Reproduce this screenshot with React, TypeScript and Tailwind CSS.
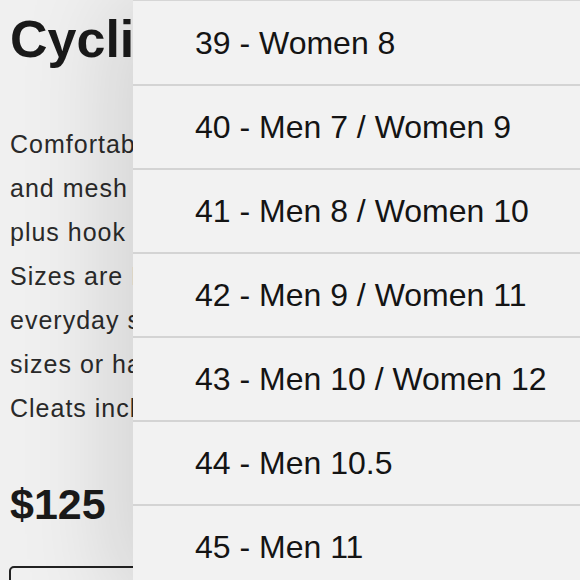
import React from "react";

const sizes = [
  "39 - Women 8",
  "40 - Men 7 / Women 9",
  "41 - Men 8 / Women 10",
  "42 - Men 9 / Women 11",
  "43 - Men 10 / Women 12",
  "44 - Men 10.5",
  "45 - Men 11",
];

const lines = [
  "Comfortable cycling shoes with synthetic upper",
  "and mesh panels for breathability. Velcro straps",
  "plus hook and loop closure for a secure fit.",
  "Sizes are European; they run small compared to",
  "everyday shoes, so consider ordering one size up for",
  "sizes or half sizes in between.",
  "Cleats included.",
];

export default function App() {
  return (
    <div
      className="relative w-[580px] h-[580px] overflow-hidden bg-[#f0f0f0]"
      style={{ fontFamily: '"Liberation Sans", Arial, sans-serif' }}
    >
      <div className="flex flex-col pl-[10px] pt-[13px]">
        <h1 className="text-[52px] leading-[52px] font-bold text-[#1a1a1a] whitespace-nowrap">
          Cycling Shoes
        </h1>
        <div className="mt-[57px] flex flex-col text-[25px] leading-[44px] tracking-[1px] text-[#2a2a2a] whitespace-nowrap">
          {lines.map((l) => (
            <span key={l}>{l}</span>
          ))}
        </div>
        <div className="mt-[53px] text-[43px] leading-[43px] font-bold text-[#1a1a1a]">
          $125
        </div>
        <div className="mt-[40px] ml-[-1px] w-[300px] h-[60px] rounded-[5px] border-2 border-[#222]" />
      </div>

      <div className="absolute left-[133px] top-0 w-[460px] h-[600px] bg-[#f2f2f2] shadow-[-20px_0_90px_rgba(0,0,0,0.13)] border-t border-[#d6d6d6] pt-[1px]">
        {sizes.map((s) => (
          <div
            key={s}
            className="h-[84px] flex items-center pl-[62px] border-b-2 border-[#d4d4d4] text-[32px] text-[#141414] whitespace-nowrap"
          >
            {s}
          </div>
        ))}
      </div>
    </div>
  );
}
